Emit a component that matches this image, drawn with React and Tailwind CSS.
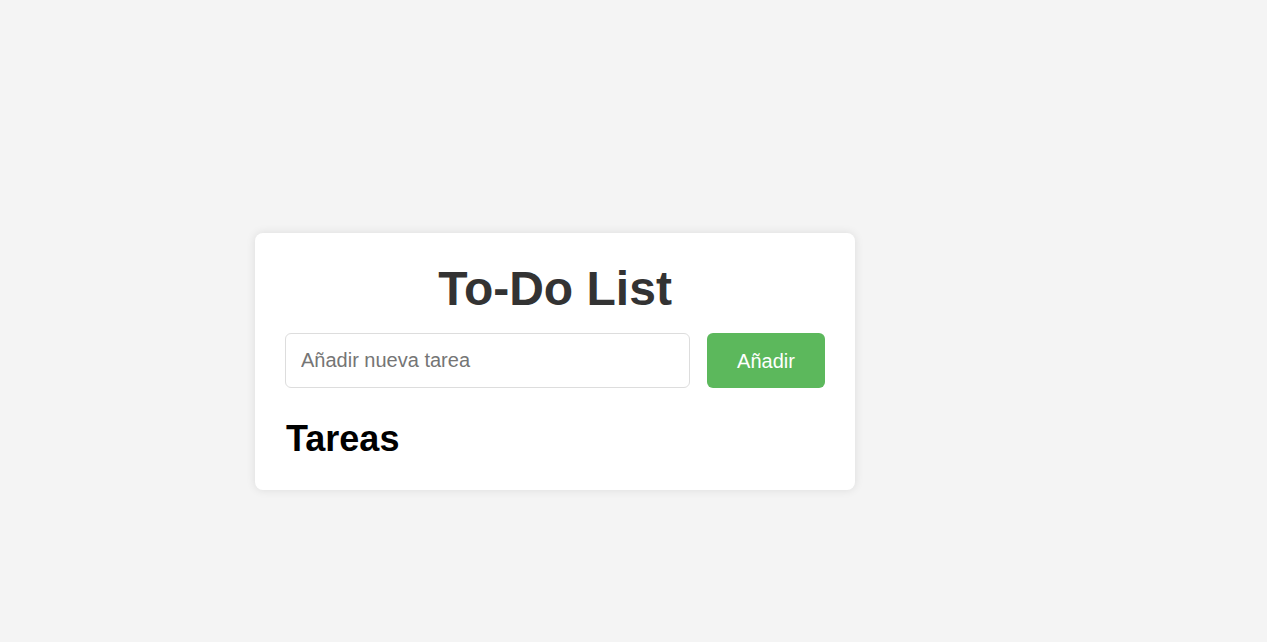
import React, { useState } from 'react';

const App = () => {
  const [task, setTask] = useState('');
  const [tasks, setTasks] = useState([]);

  const addTask = () => {
    if (!task.trim()) return;
    setTasks(prev => [...prev, task.trim()]);
    setTask('');
  };

  return (
    <div
      className="min-h-screen bg-[#f4f4f4] pt-[233px] pl-[255px]"
      style={{ fontFamily: '"Liberation Sans", Arial, sans-serif' }}
    >
      {/* Card */}
      <div className="w-[600px] bg-white rounded-lg shadow-[0_0_10px_rgba(0,0,0,0.1)] px-[30px] pt-[28px] pb-[31px]">
        <h1 className="text-center text-[48px] leading-[55px] font-bold text-[#333] mb-[17px]">
          To-Do List
        </h1>

        <div className="flex items-center gap-[17px]">
          <input
            type="text"
            value={task}
            onChange={e => setTask(e.target.value)}
            placeholder="Añadir nueva tarea"
            className="w-[405px] h-[55px] border border-[#ddd] rounded-[6px] pl-[15px] text-[20px] text-[#333] placeholder-[#757575] focus:outline-none"
          />
          <button
            onClick={addTask}
            className="w-[118px] h-[55px] bg-[#5cb85c] text-white text-[20px] rounded-[6px]"
          >
            Añadir
          </button>
        </div>

        <h2 className="mt-[30px] pl-px text-[36px] leading-[41px] font-bold text-black">Tareas</h2>
        <ul>
          {tasks.map((t, i) => (
            <li key={i} className="text-[20px] py-2 border-b border-[#eee]">{t}</li>
          ))}
        </ul>
      </div>
    </div>
  );
};

export default App;
